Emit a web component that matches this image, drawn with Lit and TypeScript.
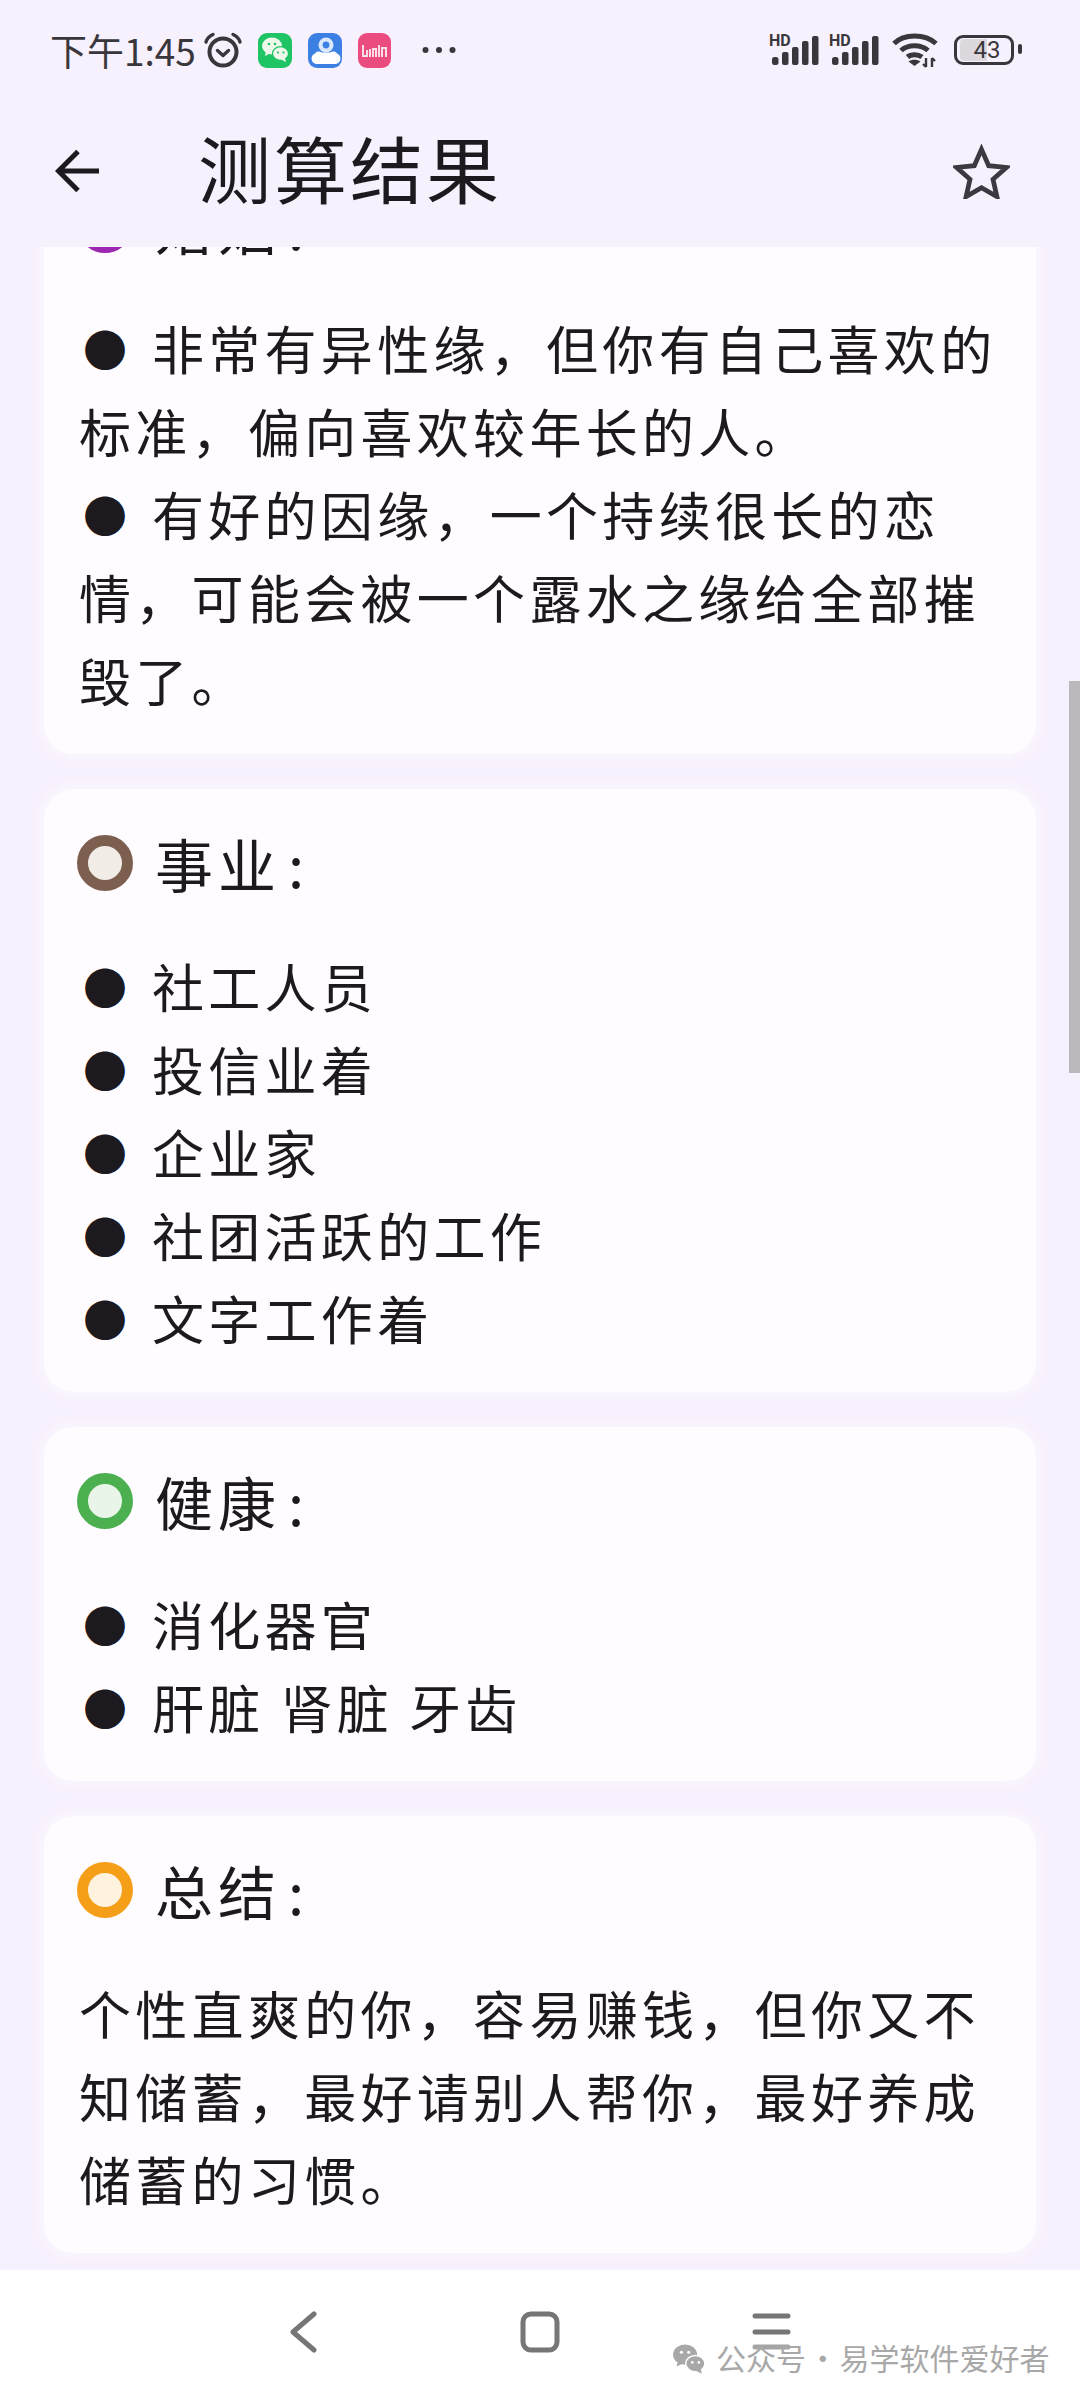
import { LitElement, html, css, svg } from "lit";
import { customElement } from "lit/decorators.js";

const sections = [
  {
    title: "婚姻",
    ring: "#9c27b0",
    core: "#f3e5f5",
    lines: [
      "● 非常有异性缘，但你有自己喜欢的标准，偏向喜欢较年长的人。",
      "● 有好的因缘，一个持续很长的恋情，可能会被一个露水之缘给全部摧毁了。",
    ],
  },
  {
    title: "事业",
    ring: "#7d5f50",
    core: "#f1ece6",
    lines: ["● 社工人员", "● 投信业着", "● 企业家", "● 社团活跃的工作", "● 文字工作着"],
  },
  {
    title: "健康",
    ring: "#4caf50",
    core: "#e9f5e9",
    lines: ["● 消化器官", "● 肝脏 肾脏 牙齿"],
  },
  {
    title: "总结",
    ring: "#f59e17",
    core: "#fff3e0",
    lines: ["个性直爽的你，容易赚钱，但你又不知储蓄，最好请别人帮你，最好养成储蓄的习惯。"],
  },
];

const wechatBubbles = svg`
  <ellipse cx="14" cy="13" rx="10" ry="8.500" fill="currentColor"/>
  <path d="M8 18l-1 5 6-3z" fill="currentColor"/>
  <ellipse cx="22.500" cy="20.500" rx="8" ry="6.800" fill="currentColor" stroke="var(--edge)" stroke-width="1.200"/>
  <path d="M27 25l1 4-5-2.500z" fill="currentColor"/>
  <circle cx="11" cy="11" r="1.300" fill="var(--edge)"/>
  <circle cx="17" cy="11" r="1.300" fill="var(--edge)"/>
  <circle cx="20" cy="19.500" r="1.100" fill="var(--edge)"/>
  <circle cx="25.500" cy="19.500" r="1.100" fill="var(--edge)"/>
`;

@customElement("app-root")
export class AppRoot extends LitElement {
  static styles = css`
    :host {
      display: flex;
      flex-direction: column;
      width: 1080px;
      height: 2400px;
      position: relative;
      overflow: hidden;
      background: #f7f0fd;
      color: #1c1a1e;
      font-family: "Noto Sans CJK SC", "Noto Sans", sans-serif;
    }
    svg {
      display: block;
      flex: none;
    }

    .status {
      height: 100px;
      flex: none;
      display: flex;
      align-items: center;
      padding: 0 58px 0 50px;
      color: #3a373c;
    }
    .time {
      font-size: 37px;
      line-height: 46px;
      width: 153px;
      white-space: nowrap;
    }
    .app-icon {
      margin-left: 16px;
    }
    .app-icon.first {
      margin-left: 15px;
    }
    .more {
      margin-left: 31px;
    }
    .status-right {
      margin-left: auto;
      display: flex;
      align-items: center;
      gap: 10px;
    }
    .signal {
      position: relative;
      width: 50px;
      height: 32px;
    }
    .hd {
      position: absolute;
      left: 0;
      top: -1px;
      font: 700 16px/16px "Roboto", sans-serif;
    }
    .wifi {
      margin-left: 3px;
    }
    .battery {
      position: relative;
      width: 68px;
      height: 30px;
      margin-left: 6px;
    }
    .battery-level {
      position: absolute;
      left: 6px;
      top: 4px;
      width: 27px;
      height: 22px;
      border-radius: 4px 0 0 4px;
      background: #dcd8de;
    }
    .battery-shell {
      position: absolute;
      left: 0;
      top: 0;
      width: 60px;
      height: 30px;
      box-sizing: border-box;
      border: 3px solid #3a373c;
      border-radius: 9px;
      padding-left: 6px;
      text-align: center;
      font: 24px/24px "Roboto", sans-serif;
    }
    .battery-cap {
      position: absolute;
      right: 0;
      top: 9px;
      width: 4px;
      height: 10px;
      border-radius: 2px;
      background: #3a373c;
    }

    .bar {
      height: 147px;
      flex: none;
      display: flex;
      align-items: center;
      padding: 0 70px 5px 55px;
      box-sizing: border-box;
    }
    .bar h1 {
      margin: 0 0 10px 98px;
      font-size: 73px;
      line-height: 80px;
      font-weight: 400;
      letter-spacing: 3px;
    }
    .star {
      margin-left: auto;
    }

    .scroll {
      flex: 1;
      min-height: 0;
      overflow: hidden;
      display: flex;
      flex-direction: column;
      gap: 35px;
      padding: 0 44px;
    }
    .card {
      flex: none;
      padding: 41px 36px 33px 35px;
      border-radius: 30px;
      background: #fefcff;
      box-shadow: 0 0 14px 4px #fbf7fd;
    }
    .card.offset {
      margin-top: -96px;
    }
    .head {
      display: flex;
      align-items: center;
      gap: 22px;
      margin: 0 0 48px -2px;
      height: 66px;
      font-size: 58px;
      letter-spacing: 5px;
      line-height: 66px;
    }
    .colon {
      margin-left: 7px;
    }
    .ring {
      width: 56px;
      height: 56px;
      flex: none;
      box-sizing: border-box;
      border-radius: 50%;
      border: 11px solid;
    }
    .line {
      font-size: 52px;
      line-height: 83px;
      letter-spacing: 4.300px;
    }
    .bullet {
      display: inline-block;
      width: 52px;
      margin-right: 5px;
      font-size: 44px;
      line-height: 1;
      letter-spacing: 0;
      text-align: center;
      vertical-align: 3px;
    }

    .scrollbar {
      position: absolute;
      right: 0;
      top: 681px;
      width: 11px;
      height: 392px;
      background: #bdb8bc;
    }

    .nav {
      height: 130px;
      flex: none;
      background: #fff;
      display: flex;
      align-items: center;
      padding: 0 0 6px 289px;
      box-sizing: border-box;
      color: #777577;
    }
    .nav-home {
      margin-left: 203px;
    }
    .nav-menu {
      margin-left: 192px;
    }

    .mark {
      position: absolute;
      left: 667px;
      top: 2337px;
      display: flex;
      align-items: center;
      gap: 8px;
      color: #a8a8a8;
      --edge: #fff;
      font-size: 30px;
      line-height: 40px;
      white-space: nowrap;
      background: rgba(255, 255, 255, 0.35);
    }
    .sep {
      margin: 0 -5px;
    }
  `;

  renderStatus() {
    return html`
      <div class="status">
        <span class="time">下午1:45</span>
        <svg width="40" height="36" viewBox="0 0 40 36" fill="none" stroke="currentColor" stroke-linecap="round" stroke-linejoin="round">
          <circle cx="20" cy="20" r="13.500" stroke-width="4"/>
          <path d="M14.500 18.500l5.500 5 5.500-5" stroke-width="3.400"/>
          <path d="M3 10C4 6.500 6.500 4 10 2.500M37 10C36 6.500 33.500 4 30 2.500" stroke-width="3.400"/>
        </svg>
        <svg class="app-icon first" width="34" height="35" viewBox="0 0 34 35" style="color:#eef8ea;--edge:#1fc464">
          <rect width="34" height="35" rx="9" fill="#1fc464"/>
          ${wechatBubbles}
        </svg>
        <svg class="app-icon" width="34" height="35" viewBox="0 0 34 35">
          <rect width="34" height="35" rx="9" fill="#3d80e4"/>
          <circle cx="18" cy="12" r="7.500" fill="#dbe8fb"/>
          <circle cx="18" cy="12" r="3.400" fill="#3d80e4"/>
          <path d="M8 31a5.500 5.500 0 0 1-1-10.500c2-3 5-2 7-1h8c2-1 5-2 7 1a5.500 5.500 0 0 1-1 10.500z" fill="#fff"/>
        </svg>
        <svg class="app-icon" width="33" height="35" viewBox="0 0 33 35" fill="none">
          <rect width="33" height="35" rx="9" fill="#ea4c7f"/>
          <path d="M5 12v11h4v-6M12 24v-8M15 24v-8h3v8M21 12v12M24 24v-9h4v9" stroke="#fbe3ea" stroke-width="1.900"/>
        </svg>
        <svg class="more" width="34" height="8" viewBox="0 0 34 8" fill="currentColor">
          <circle cx="3.500" cy="4" r="3"/>
          <circle cx="17" cy="4" r="3"/>
          <circle cx="30.500" cy="4" r="3"/>
        </svg>
        <div class="status-right">
          ${[0, 1].map(
            () => html`
              <div class="signal">
                <span class="hd">HD</span>
                <svg width="50" height="32" viewBox="0 0 50 32" fill="currentColor">
                  <rect x="3" y="23" width="6.500" height="8" rx="2.500"/>
                  <rect x="13" y="18" width="6.500" height="13" rx="2"/>
                  <rect x="23" y="13" width="6.500" height="18" rx="2"/>
                  <rect x="33" y="7" width="6.500" height="24" rx="2"/>
                  <rect x="43" y="2" width="6.500" height="29" rx="2"/>
                </svg>
              </div>
            `
          )}
          <svg class="wifi" width="46" height="36" viewBox="0 0 46 36" fill="none" stroke="currentColor" stroke-width="5">
            <path d="M2 11.500C12 1.500 33 1.500 44 11.500"/>
            <path d="M9 18.500C16 12 29 12 36 18.500"/>
            <path d="M15.500 25C19 22 26 22 30 25"/>
            <path d="M22.500 34l-6-4.500c3-2.500 9-2.500 12 0z" fill="currentColor" stroke="none"/>
            <path d="M34 26v9M31 32l3 3M40 26v9M40 26l3 3" stroke-width="2.400"/>
          </svg>
          <div class="battery">
            <div class="battery-level"></div>
            <div class="battery-shell">43</div>
            <div class="battery-cap"></div>
          </div>
        </div>
      </div>
    `;
  }

  renderBar() {
    return html`
      <div class="bar">
        <svg width="45" height="44" viewBox="0 0 45 44" fill="none" stroke="#1c1a1e" stroke-width="5">
          <path d="M44 22H4M23 2.500L3.500 22 23 41.500"/>
        </svg>
        <h1>测算结果</h1>
        <svg class="star" width="57" height="55" viewBox="0 0 54 52" fill="none" stroke="#3c3940" stroke-width="4.500">
          <path d="M27 5l6.800 15.500 16.700 1.700-12.600 11.200 3.700 16.400L27 41.300 12.400 49.800l3.700-16.400L3.500 22.200l16.700-1.700z"/>
        </svg>
      </div>
    `;
  }

  renderLine(line: string) {
    if (!line.startsWith("● ")) return html`<div class="line">${line}</div>`;
    return html`<div class="line"><span class="bullet">●</span> ${line.slice(2)}</div>`;
  }

  renderSection(s: (typeof sections)[number], i: number) {
    return html`
      <section class="card ${i === 0 ? "offset" : ""}">
        <div class="head">
          <span class="ring" style="border-color:${s.ring};background:${s.core}"></span>
          <span>${s.title}<span class="colon">:</span></span>
        </div>
        ${s.lines.map((l) => this.renderLine(l))}
      </section>
    `;
  }

  render() {
    return html`
      ${this.renderStatus()} ${this.renderBar()}
      <div class="scroll">${sections.map((s, i) => this.renderSection(s, i))}</div>
      <div class="nav">
        <svg width="28" height="42" viewBox="0 0 28 42" fill="none" stroke="currentColor" stroke-width="5" stroke-linecap="round" stroke-linejoin="round">
          <path d="M25 3L4 21l21 18"/>
        </svg>
        <svg class="nav-home" width="40" height="42" viewBox="0 0 40 42" fill="none" stroke="currentColor" stroke-width="5">
          <rect x="3" y="3" width="34" height="36" rx="8"/>
        </svg>
        <svg class="nav-menu" width="40" height="40" viewBox="0 0 40 40" stroke="currentColor" stroke-width="5" stroke-linecap="round">
          <path d="M3 4h33M3 20h33M3 35h33"/>
        </svg>
      </div>
      <div class="scrollbar"></div>
      <div class="mark">
        <svg width="41" height="36" viewBox="0 0 32 30">${wechatBubbles}</svg>
        <span>公众号<span class="sep"> · </span>易学软件爱好者</span>
      </div>
    `;
  }
}
